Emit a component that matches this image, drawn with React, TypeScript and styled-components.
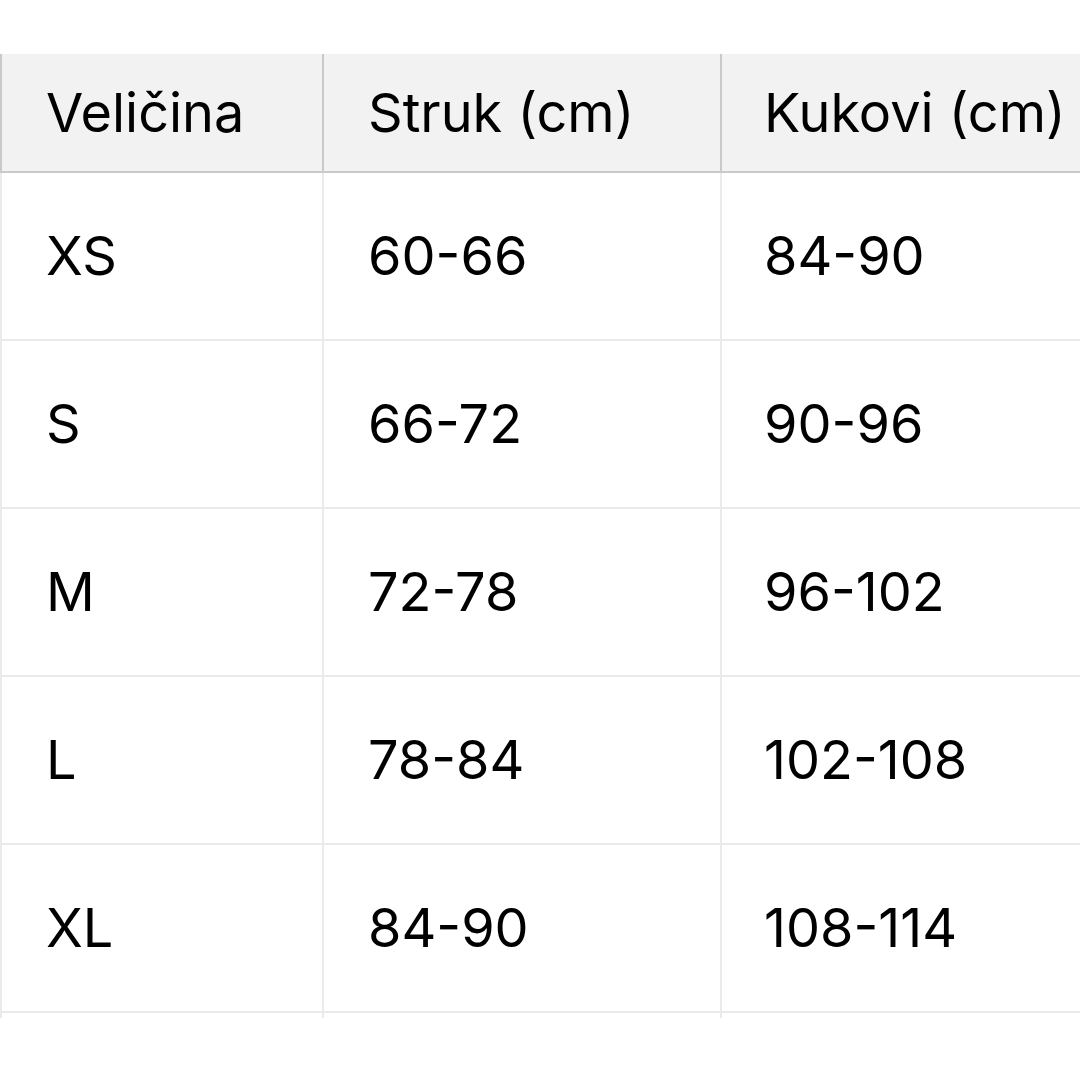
import React from "react";
import styled, { createGlobalStyle } from "styled-components";

const Global = createGlobalStyle`
  html, body { margin: 0; padding: 0; background: #ffffff; }
  body { font-family: Inter, "Liberation Sans", Arial, sans-serif; }
`;

const Page = styled.div`
  width: 1080px;
  height: 1080px;
  padding-top: 54px;
  box-sizing: border-box;
  background: #ffffff;
`;

const Clip = styled.div`
  width: 1080px;
  height: 964px;
  overflow: hidden;
`;

const Table = styled.div`
  width: 1160px;
  display: flex;
  flex-direction: column;
`;

const Row = styled.div<{ $head?: boolean }>`
  display: grid;
  grid-template-columns: 322px 398px 1fr;
  height: ${(p) => (p.$head ? 119 : 168)}px;
  background: ${(p) => (p.$head ? "#f2f2f2" : "#ffffff")};
`;

const Cell = styled.div<{ $head?: boolean; $pad?: number }>`
  box-sizing: border-box;
  display: flex;
  align-items: center;
  padding-left: ${(p) => p.$pad ?? 44}px;
  padding-bottom: ${(p) => (p.$head ? 0 : 1)}px;
  border-left: 2px solid ${(p) => (p.$head ? "#c9c9c9" : "#ebebeb")};
  border-bottom: 2px solid ${(p) => (p.$head ? "#c9c9c9" : "#ebebeb")};
  font-family: Inter, "Liberation Sans", Arial, sans-serif;
  font-size: 54px;
  line-height: 1;
  color: #000000;
  white-space: nowrap;
`;

const headers = ["Veličina", "Struk (cm)", "Kukovi (cm)"];
const rows = [
  ["XS", "60-66", "84-90"],
  ["S", "66-72", "90-96"],
  ["M", "72-78", "96-102"],
  ["L", "78-84", "102-108"],
  ["XL", "84-90", "108-114"],
  ["", "", ""],
];

const pads = [44, 44, 42];

export default function App() {
  return (
    <>
      <Global />
      <Page>
        <Clip>
          <Table>
            <Row $head>
              {headers.map((h, i) => (
                <Cell $head key={h} $pad={pads[i]}>
                  {h}
                </Cell>
              ))}
            </Row>
            {rows.map((r, ri) => (
              <Row key={ri}>
                {r.map((c, ci) => (
                  <Cell key={ci} $pad={pads[ci]}>
                    {c}
                  </Cell>
                ))}
              </Row>
            ))}
          </Table>
        </Clip>
      </Page>
    </>
  );
}
